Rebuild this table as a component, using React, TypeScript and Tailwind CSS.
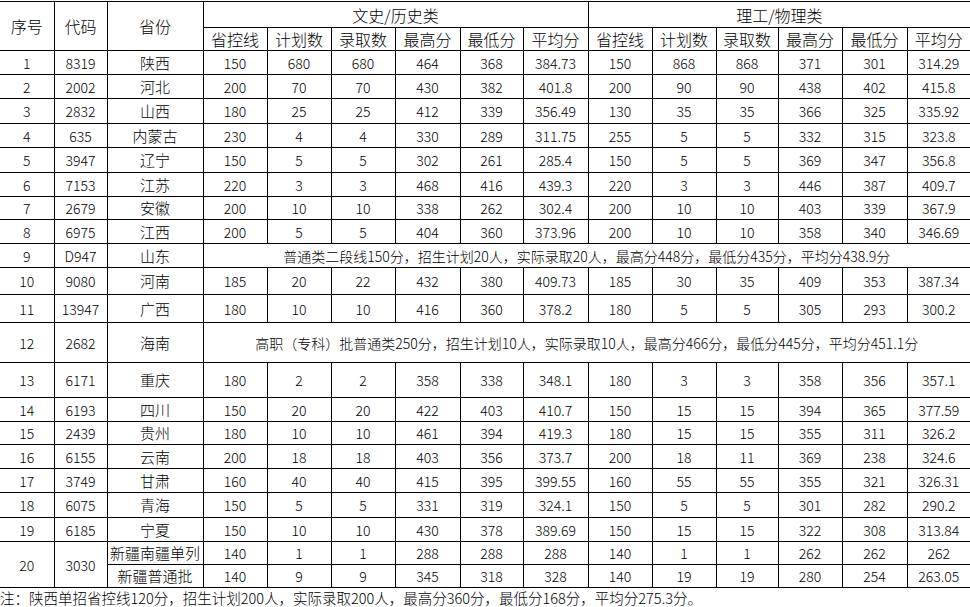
import React from "react";

type Row = {
  no: string;
  code: string;
  prov: string;
  a?: string[];
  b?: string[];
  span?: string;
  h: number;
};

const rows: Row[] = [
  { no: "1", code: "8319", prov: "陕西", a: ["150", "680", "680", "464", "368", "384.73"], b: ["150", "868", "868", "371", "301", "314.29"], h: 24 },
  { no: "2", code: "2002", prov: "河北", a: ["200", "70", "70", "430", "382", "401.8"], b: ["200", "90", "90", "438", "402", "415.8"], h: 24 },
  { no: "3", code: "2832", prov: "山西", a: ["180", "25", "25", "412", "339", "356.49"], b: ["130", "35", "35", "366", "325", "335.92"], h: 25 },
  { no: "4", code: "635", prov: "内蒙古", a: ["230", "4", "4", "330", "289", "311.75"], b: ["255", "5", "5", "332", "315", "323.8"], h: 24 },
  { no: "5", code: "3947", prov: "辽宁", a: ["150", "5", "5", "302", "261", "285.4"], b: ["150", "5", "5", "369", "347", "356.8"], h: 25 },
  { no: "6", code: "7153", prov: "江苏", a: ["220", "3", "3", "468", "416", "439.3"], b: ["220", "3", "3", "446", "387", "409.7"], h: 24 },
  { no: "7", code: "2679", prov: "安徽", a: ["200", "10", "10", "338", "262", "302.4"], b: ["200", "10", "10", "403", "339", "367.9"], h: 23 },
  { no: "8", code: "6975", prov: "江西", a: ["200", "5", "5", "404", "360", "373.96"], b: ["200", "10", "10", "358", "340", "346.69"], h: 24 },
  { no: "9", code: "D947", prov: "山东", span: "普通类二段线150分，招生计划20人，实际录取20人，最高分448分，最低分435分，平均分438.9分", h: 24 },
  { no: "10", code: "9080", prov: "河南", a: ["185", "20", "22", "432", "380", "409.73"], b: ["185", "30", "35", "409", "353", "387.34"], h: 27 },
  { no: "11", code: "13947", prov: "广西", a: ["180", "10", "10", "416", "360", "378.2"], b: ["180", "5", "5", "305", "293", "300.2"], h: 28 },
  { no: "12", code: "2682", prov: "海南", span: "高职（专科）批普通类250分，招生计划10人，实际录取10人，最高分466分，最低分445分，平均分451.1分", h: 40 },
  { no: "13", code: "6171", prov: "重庆", a: ["180", "2", "2", "358", "338", "348.1"], b: ["180", "3", "3", "358", "356", "357.1"], h: 35 },
  { no: "14", code: "6193", prov: "四川", a: ["150", "20", "20", "422", "403", "410.7"], b: ["150", "15", "15", "394", "365", "377.59"], h: 24 },
  { no: "15", code: "2439", prov: "贵州", a: ["180", "10", "10", "461", "394", "419.3"], b: ["180", "15", "15", "355", "311", "326.2"], h: 23 },
  { no: "16", code: "6155", prov: "云南", a: ["200", "18", "18", "403", "356", "373.7"], b: ["200", "18", "11", "369", "238", "324.6"], h: 24 },
  { no: "17", code: "3749", prov: "甘肃", a: ["160", "40", "40", "415", "395", "399.55"], b: ["160", "55", "55", "355", "321", "326.31"], h: 24 },
  { no: "18", code: "6075", prov: "青海", a: ["150", "5", "5", "331", "319", "324.1"], b: ["150", "5", "5", "301", "282", "290.2"], h: 25 },
  { no: "19", code: "6185", prov: "宁夏", a: ["150", "10", "10", "430", "378", "389.69"], b: ["150", "15", "15", "322", "308", "313.84"], h: 24 },
];

const widths = [54, 53, 96, 64, 64, 64, 65, 63, 65, 64, 64, 62, 64, 65, 63];
const sub = ["省控线", "计划数", "录取数", "最高分", "最低分", "平均分"];

const cell = "border border-black p-0 text-center align-middle";
const first = "border border-l-0 border-black p-0 text-center align-middle";
const last = "border border-r-0 border-black p-0 text-center align-middle";

function Vals({ vals }: { vals: string[] }) {
  return (
    <>
      {vals.map((v, i) => (
        <td key={i} className={cell}>
          {v}
        </td>
      ))}
    </>
  );
}

function ValsLast({ vals }: { vals: string[] }) {
  return (
    <>
      {vals.map((v, i) => (
        <td key={i} className={i === vals.length - 1 ? last : cell}>
          {v}
        </td>
      ))}
    </>
  );
}

export default function App() {
  return (
    <div className="w-[970px] h-[607px] overflow-hidden bg-white text-black font-light font-['Noto_Sans_CJK_SC','Noto_Sans',sans-serif]">
      <table className="mt-px w-[970px] table-fixed border-collapse text-[14px] leading-[18px]">
        <colgroup>
          {widths.map((w, i) => (
            <col key={i} style={{ width: w }} />
          ))}
        </colgroup>
        <tbody>
          <tr className="h-[26px] text-[16px]">
            <td rowSpan={2} className={first}>序号</td>
            <td rowSpan={2} className={cell}>代码</td>
            <td rowSpan={2} className={cell}>省份</td>
            <td colSpan={6} className={cell}>文史/历史类</td>
            <td colSpan={6} className={last}>理工/物理类</td>
          </tr>
          <tr className="h-[23px] text-[16px]">
            {sub.map((s, i) => (
              <td key={"a" + i} className={cell}>{s}</td>
            ))}
            {sub.map((s, i) => (
              <td key={"b" + i} className={i === 5 ? last : cell}>{s}</td>
            ))}
          </tr>
          {rows.map((r) => (
            <tr key={r.no} style={{ height: r.h }}>
              <td className={first}>{r.no}</td>
              <td className={cell}>{r.code}</td>
              <td className={cell + " text-[15px]"}>{r.prov}</td>
              {r.span ? (
                <td colSpan={12} className={last}>{r.span}</td>
              ) : (
                <>
                  <Vals vals={r.a!} />
                  <ValsLast vals={r.b!} />
                </>
              )}
            </tr>
          ))}
          <tr className="h-[23px]">
            <td rowSpan={2} className={first}>20</td>
            <td rowSpan={2} className={cell}>3030</td>
            <td className={cell + " text-[15px]"}>新疆南疆单列</td>
            <Vals vals={["140", "1", "1", "288", "288", "288"]} />
            <ValsLast vals={["140", "1", "1", "262", "262", "262"]} />
          </tr>
          <tr className="h-[23px]">
            <td className={cell + " text-[15px]"}>新疆普通批</td>
            <Vals vals={["140", "9", "9", "345", "318", "328"]} />
            <ValsLast vals={["140", "19", "19", "280", "254", "263.05"]} />
          </tr>
        </tbody>
      </table>
      <p className="text-[14.5px] leading-[20px]">
        注：陕西单招省控线120分，招生计划200人，实际录取200人，最高分360分，最低分168分，平均分275.3分。
      </p>
    </div>
  );
}
